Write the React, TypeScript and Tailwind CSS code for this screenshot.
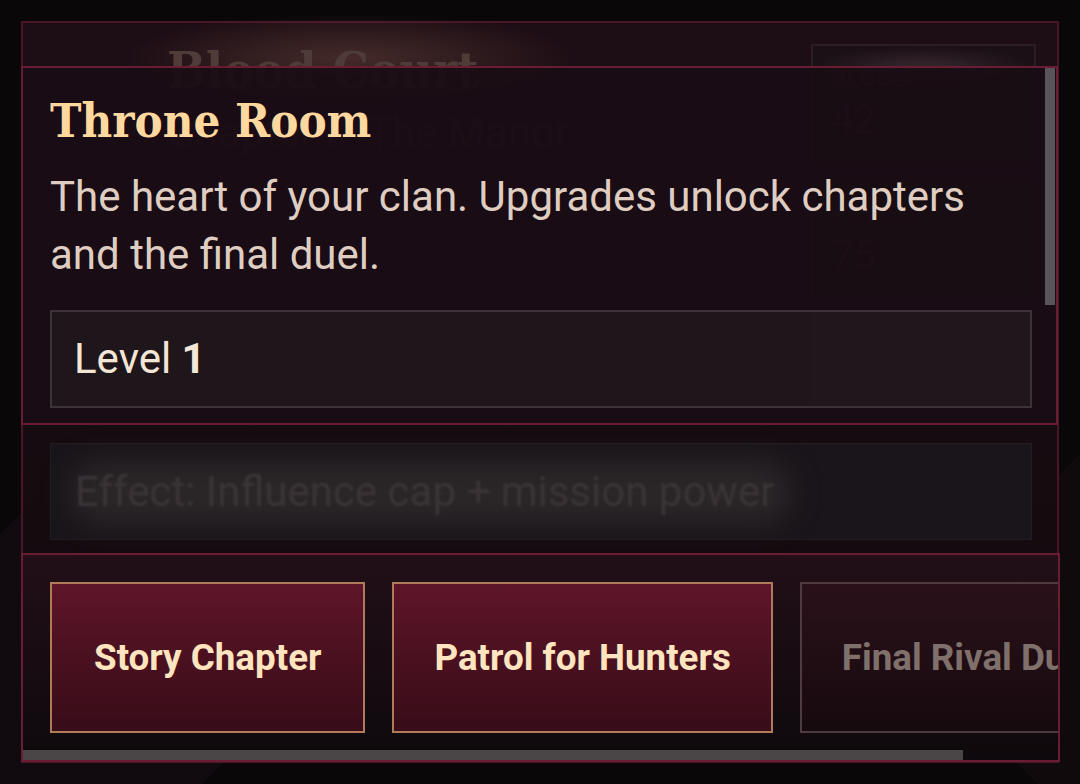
export default function App() {
  return (
    <div className="relative w-[1080px] h-[784px] overflow-hidden bg-[#0a0709] font-['Roboto','Liberation_Sans',sans-serif] p-[21px]">
      {/* background decor */}
      <div className="pointer-events-none absolute -left-[120px] top-[560px] h-[320px] w-[320px] rotate-45 bg-[#110b0f]" />
      <div className="pointer-events-none absolute -right-[200px] top-[480px] h-[320px] w-[320px] rotate-45 bg-[#100a0d]" />

      {/* back screen */}
      <div className="relative h-[742px] border-2 border-[#4a1627] bg-gradient-to-b from-[#1d0e15] to-[#100a0d]">
        <div className="flex justify-between">
          <div className="ml-[110px] mt-[15px]">
            <div className="relative px-[34px]">
              <div className="absolute -inset-x-[10px] -top-[25px] h-[90px] bg-[radial-gradient(ellipse_at_center,rgba(96,62,54,0.6),rgba(40,20,26,0)_70%)]" />
              <h1 className="relative font-['DejaVu_Serif_Condensed','DejaVu_Serif',serif] font-stretch-condensed text-[51px] leading-[64px] font-bold text-[#4f3b38]">
                Blood Court
              </h1>
            </div>
            <div className="ml-[34px] mt-[6px] text-[42px] leading-[50px] text-[#3a2a30]">Chapter I · The Manor</div>
          </div>
          <div className="mr-[21px] mt-[21px] flex w-[225px] flex-col gap-[12px]">
            <div className="relative h-[124px] border-2 border-[#2c1d23] bg-[#1a1016] px-[18px] pt-[14px]">
              <div className="absolute inset-x-0 top-0 h-[40px] bg-[radial-gradient(ellipse_at_center,rgba(80,60,66,0.5),rgba(0,0,0,0)_70%)]" />
              <div className="relative text-[24px] tracking-wide text-[#3e2c33]">BLOOD</div>
              <div className="relative text-[40px] leading-[48px] text-[#3e2c33]">42</div>
            </div>
            <div className="h-[118px] border-2 border-[#22151b] bg-[#171015] px-[18px] pt-[14px]">
              <div className="text-[24px] tracking-wide text-[#2e2026]">POWER</div>
              <div className="text-[40px] leading-[48px] text-[#33242a]">75</div>
            </div>
            <div className="h-[100px] border-2 border-[#2a2226] bg-[#1d171b] px-[18px] pt-[10px]">
              <div className="text-[24px] tracking-wide text-[#2f262b]">INFLUENCE</div>
              <div className="text-[40px] leading-[44px] text-[#2f262b]">3</div>
            </div>
          </div>
        </div>
      </div>

      {/* effect (faded overflow) */}
      <div className="absolute left-[50px] top-[443px] h-[97px] w-[982px] border border-[#231c20] bg-[#19151a]">
        <div className="absolute left-[20px] top-[18px] h-[62px] w-[720px] rounded-[30px] bg-[#2b2628] blur-[14px]" />
        <div className="relative pl-[24px] pt-[19px] text-[42px] leading-[58px] text-[#3b3437] blur-[1px]">
          Effect: Influence cap + mission power
        </div>
      </div>

      {/* modal */}
      <div className="absolute left-[21px] top-[66px] h-[359px] w-[1037px] overflow-hidden border-2 border-[#6a1c33] bg-[#1a0d14]/[0.94]">
        <div className="pl-[27px] pr-[24px] pt-[23px]">
          <h2 className="font-['DejaVu_Serif_Condensed','DejaVu_Serif',serif] font-stretch-condensed text-[47px] leading-[60px] font-bold text-[#ffd8a0]">
            Throne Room
          </h2>
          <p className="mt-[17px] text-[42px] leading-[58px] text-[#dfcdc1]">
            The heart of your clan. Upgrades unlock chapters and the final duel.
          </p>
          <div className="mt-[26px] border-2 border-[#3c3237] bg-[#1f181d]/[0.92] px-[22px] py-[18px] text-[42px] leading-[58px] text-[#f3e6d6]">
            Level <span className="font-bold">1</span>
          </div>
        </div>
        <div className="absolute right-[1px] top-0 h-[237px] w-[10px] bg-[#59545a]" />
      </div>

      {/* bottom action bar */}
      <div className="absolute left-[21px] top-[553px] h-[209px] w-[1039px] overflow-hidden border-2 border-[#6a1c33] bg-gradient-to-b from-[#220f18] to-[#0e090c]">
        <div className="flex gap-[27px] pl-[27px] pt-[27px]">
          <button className="h-[151px] shrink-0 border-2 border-[#b27b58] bg-gradient-to-b from-[#5e1529] to-[#380c18] px-[42px] text-[36.75px] font-bold text-[#ffe4c0]">
            Story Chapter
          </button>
          <button className="h-[151px] shrink-0 border-2 border-[#b27b58] bg-gradient-to-b from-[#5e1529] to-[#380c18] px-[40px] text-[36.75px] font-bold text-[#ffe4c0]">
            Patrol for Hunters
          </button>
          <button className="h-[151px] shrink-0 border-2 border-[#4e3a3f] bg-gradient-to-b from-[#2b1119] to-[#160a0f] px-[40px] text-[36.75px] font-bold text-[#7f706c]">
            Final Rival Duel
          </button>
        </div>
        <div className="absolute bottom-0 left-0 h-[10px] w-[940px] bg-[#4a4648]" />
      </div>
    </div>
  );
}
